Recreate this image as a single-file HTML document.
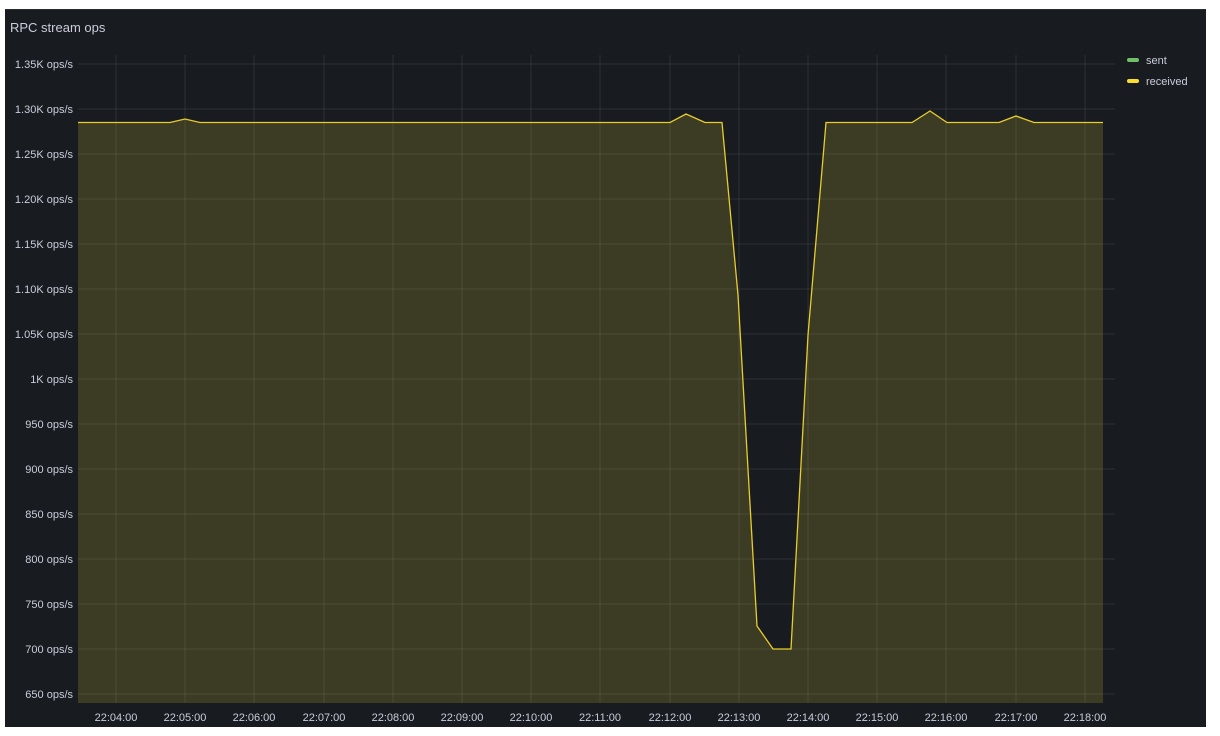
<!DOCTYPE html>
<html><head><meta charset="utf-8"><style>
body{margin:0;background:#fff;width:1220px;height:736px;overflow:hidden;font-family:"Liberation Sans",sans-serif}
.p{position:absolute;left:5px;top:9px;width:1201px;height:717px;background:#181b1f;border-top:1px solid #2a2d32}
.t{position:absolute;left:10px;top:20px;color:#ccccdc;font-size:13px}
</style></head><body>
<div class="p"></div>
<div class="t">RPC stream ops</div>
<svg width="1220" height="736" style="position:absolute;left:0;top:0" font-family="Liberation Sans" font-size="11" fill="#ccccdc">
<g stroke="rgba(255,255,255,0.09)" stroke-width="1">
<line x1="78" x2="1115" y1="64" y2="64"/><line x1="78" x2="1115" y1="109" y2="109"/><line x1="78" x2="1115" y1="154" y2="154"/><line x1="78" x2="1115" y1="199" y2="199"/><line x1="78" x2="1115" y1="244" y2="244"/><line x1="78" x2="1115" y1="289" y2="289"/><line x1="78" x2="1115" y1="334" y2="334"/><line x1="78" x2="1115" y1="379" y2="379"/><line x1="78" x2="1115" y1="424" y2="424"/><line x1="78" x2="1115" y1="469" y2="469"/><line x1="78" x2="1115" y1="514" y2="514"/><line x1="78" x2="1115" y1="559" y2="559"/><line x1="78" x2="1115" y1="604" y2="604"/><line x1="78" x2="1115" y1="649" y2="649"/><line x1="78" x2="1115" y1="694" y2="694"/>
<line y1="55" y2="703" x1="116" x2="116"/><line y1="55" y2="703" x1="185" x2="185"/><line y1="55" y2="703" x1="254" x2="254"/><line y1="55" y2="703" x1="324" x2="324"/><line y1="55" y2="703" x1="393" x2="393"/><line y1="55" y2="703" x1="462" x2="462"/><line y1="55" y2="703" x1="531" x2="531"/><line y1="55" y2="703" x1="600" x2="600"/><line y1="55" y2="703" x1="670" x2="670"/><line y1="55" y2="703" x1="739" x2="739"/><line y1="55" y2="703" x1="808" x2="808"/><line y1="55" y2="703" x1="877" x2="877"/><line y1="55" y2="703" x1="946" x2="946"/><line y1="55" y2="703" x1="1016" x2="1016"/><line y1="55" y2="703" x1="1085" x2="1085"/>
</g>
<path d="M78,122.5 L170,122.5 185,119 200,122.5 670,122.5 686,114 705,122.5 722,122.5 738,295 757,626 773,649 791,649 808,335 826,122.5 912,122.5 930,111 947,122.5 999,122.5 1016,116 1034,122.5 1103,122.5 L1103,703 L78,703 Z" fill="rgba(230,210,60,0.18)"/>
<path d="M78,122.5 L170,122.5 185,119 200,122.5 670,122.5 686,114 705,122.5 722,122.5 738,295 757,626 773,649 791,649 808,335 826,122.5 912,122.5 930,111 947,122.5 999,122.5 1016,116 1034,122.5 1103,122.5" fill="none" stroke="#e8cd2c" stroke-width="1.3"/>
<g text-anchor="end">
<text x="73" y="68">1.35K ops/s</text><text x="73" y="113">1.30K ops/s</text><text x="73" y="158">1.25K ops/s</text><text x="73" y="203">1.20K ops/s</text><text x="73" y="248">1.15K ops/s</text><text x="73" y="293">1.10K ops/s</text><text x="73" y="338">1.05K ops/s</text><text x="73" y="383">1K ops/s</text><text x="73" y="428">950 ops/s</text><text x="73" y="473">900 ops/s</text><text x="73" y="518">850 ops/s</text><text x="73" y="563">800 ops/s</text><text x="73" y="608">750 ops/s</text><text x="73" y="653">700 ops/s</text><text x="73" y="698">650 ops/s</text>
</g>
<g text-anchor="middle">
<text x="116" y="721">22:04:00</text><text x="185" y="721">22:05:00</text><text x="254" y="721">22:06:00</text><text x="324" y="721">22:07:00</text><text x="393" y="721">22:08:00</text><text x="462" y="721">22:09:00</text><text x="531" y="721">22:10:00</text><text x="600" y="721">22:11:00</text><text x="670" y="721">22:12:00</text><text x="739" y="721">22:13:00</text><text x="808" y="721">22:14:00</text><text x="877" y="721">22:15:00</text><text x="946" y="721">22:16:00</text><text x="1016" y="721">22:17:00</text><text x="1085" y="721">22:18:00</text>
</g>
<rect x="1127" y="58" width="12" height="4" rx="2" fill="#73bf69"/><text x="1146" y="64">sent</text>
<rect x="1127" y="79" width="12" height="4" rx="2" fill="#fade2a"/><text x="1146" y="85">received</text>
</svg>
</body></html>
